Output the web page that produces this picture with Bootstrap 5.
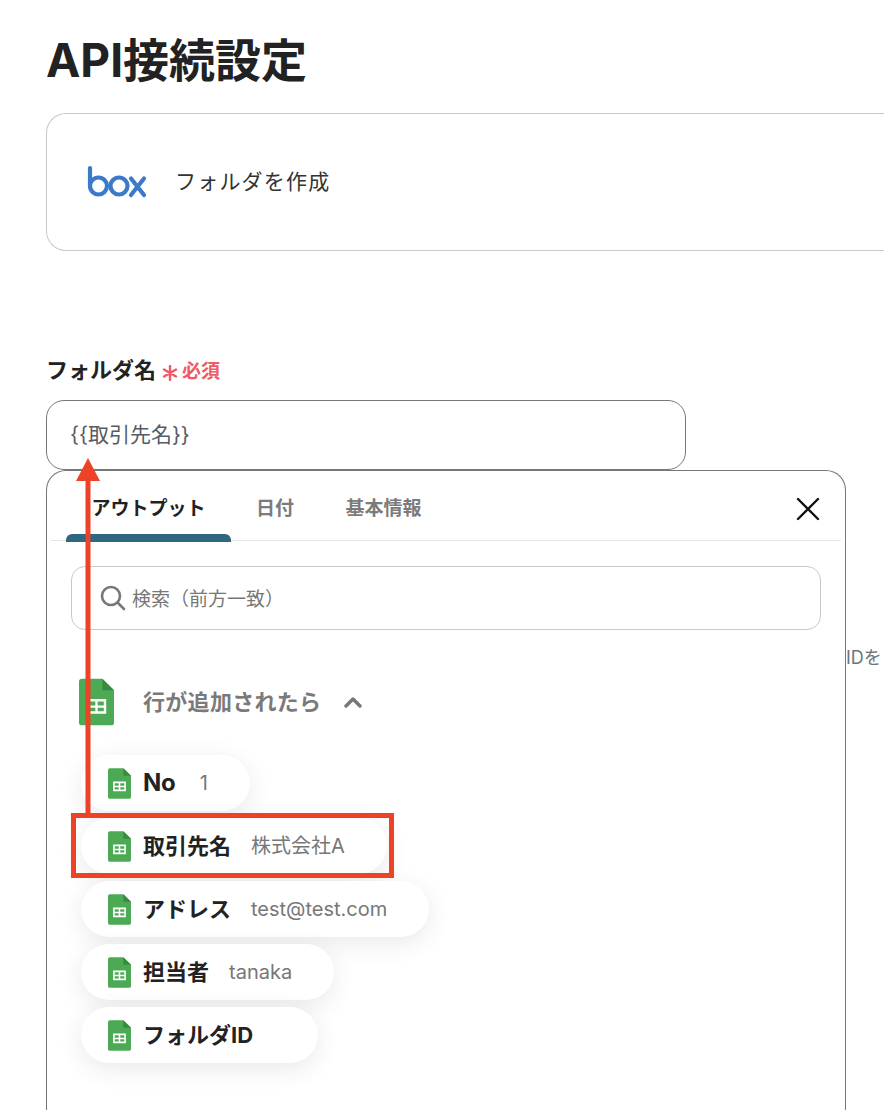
<!DOCTYPE html>
<html lang="ja">
<head>
<meta charset="utf-8">
<title>API接続設定</title>
<link href="https://cdn.jsdelivr.net/npm/bootstrap@5.3.0/dist/css/bootstrap.min.css" rel="stylesheet">
<style>
html,body{margin:0;height:1110px;overflow:hidden;background:#fff}
body{font-family:Inter,"Noto Sans CJK JP",sans-serif;color:#222;position:relative;width:884px}
.pg{padding:32px 0 0 46px;width:884px;overflow:hidden;height:1110px;position:relative}
.ttl{font-size:46px;font-weight:700;line-height:56px;margin:0 0 25px;color:#222}
.appcard{width:838px;height:138px;border:1px solid #c9c9c9;border-right:0;border-radius:20px 0 0 20px;padding-left:40px;gap:28px;font-size:21px;letter-spacing:1.200px;color:#333}
.lbl{margin-top:101px;margin-bottom:12px;height:36px;font-size:22px;font-weight:700;color:#222;gap:6px;line-height:1}
.req{color:#ef5a67;font-size:19px;font-weight:700;margin-top:2px;margin-left:-2px}
.star{width:16px;height:16px;margin-top:5px}
.fld{width:640px;height:70px;border:1px solid #777;border-radius:18px;padding-left:23px;font-size:21px;color:#555c63}
.pop{position:absolute;left:46px;top:470px;width:800px;height:640px;background:#fff;border:1px solid #777;border-bottom:0;border-radius:20px 20px 0 0;padding:0 24px}
.tabs{height:70px;margin:0 -20px;padding-left:15px;border-bottom:1px solid #e4e4e4;position:relative;font-size:19px;font-weight:700;color:#7b7b7b}
.tb{height:70px;line-height:75px;text-align:center}
.tb1{width:165px;color:#222;position:relative}
.tb1::after{content:"";position:absolute;left:0;right:0;bottom:-1px;height:8px;background:#2f6680;border-radius:6px 6px 0 0}
.tb2{width:88px}.tb3{width:105px;margin-left:12px}
.xbtn{position:absolute;right:21px;top:26px;width:24px;height:24px}
.srch{height:64px;margin-top:25px;border:1px solid #c9c9c9;border-radius:14px;padding-left:28px;gap:6px;font-size:19px;color:#777}
.srch span{padding-top:4px}
.grp{margin:47px 0 0 8px;height:50px;font-size:22px;font-weight:700;color:#7a7a7a;gap:29px;letter-spacing:.3px}
.chev{margin-left:-6px}
.chips{margin:28px 0 0 10px;gap:7px;align-items:flex-start}
.chip{height:56px;border-radius:28px;background:#fff;box-shadow:0 6px 26px rgba(0,0,0,.09);padding:0 42px 0 27px;gap:12px}
.chip b{font-size:22px;font-weight:700;color:#222;line-height:1}
.chip b.lat{font-size:24px;letter-spacing:-.2px;margin-right:4px}
.chip span{font-size:20px;color:#777;margin-left:8px;min-width:3px}
.side{position:absolute;left:846px;top:647px;font-size:18px;color:#6c757d;line-height:22px;white-space:nowrap}
.arr{position:absolute;left:76px;top:458px;width:24px;height:358px;overflow:visible}
.box{position:absolute;left:71px;top:813px;width:323px;height:65px;border:5px solid #ec4327}
</style>
</head>
<body>
<svg width="0" height="0" class="position-absolute">
<symbol id="sh" viewBox="0 0 36 48">
<path d="M3 0H24L36 12V45a3 3 0 0 1-3 3H3a3 3 0 0 1-3-3V3a3 3 0 0 1 3-3z" fill="#4caa55"/>
<path d="M24 0L36 12H24z" fill="#378a3f"/>
<path d="M8 21H28V36H8zM10.500 23.500V27.500H16.800V23.500zM19.200 23.500V27.500H25.500V23.500zM10.500 30V33.500H16.800V30zM19.200 30V33.500H25.500V30z" fill="#fff" fill-rule="evenodd"/>
</symbol>
</svg>
<div class="pg">
<h1 class="ttl">API接続設定</h1>
<div class="appcard d-flex align-items-center bg-white">
<svg width="60" height="34" viewBox="0 0 60 34" fill="none" stroke="#3b7ac9" stroke-width="4.200" stroke-linecap="round"><path d="M3 3V21"/><circle cx="11.500" cy="21" r="8.500"/><circle cx="32" cy="21" r="8.500"/><path d="M44 13.500L57 30M57 13.500L44 30"/></svg>
<span>フォルダを作成</span>
</div>
<div class="lbl d-flex align-items-center">
<span>フォルダ名</span>
<svg class="star" viewBox="0 0 16 16" stroke="#ef5a67" stroke-width="2.400" stroke-linecap="round"><path d="M8 1V15M2 4.500L14 11.500M14 4.500L2 11.500"/></svg>
<span class="req">必須</span>
</div>
<div class="fld d-flex align-items-center">{{取引先名}}</div>
<div class="side">IDを</div>
</div>
<div class="pop">
<div class="tabs d-flex">
<div class="tb tb1">アウトプット</div>
<div class="tb tb2">日付</div>
<div class="tb tb3">基本情報</div>
<svg class="xbtn" viewBox="0 0 24 24" stroke="#111" stroke-width="2.400" stroke-linecap="round"><path d="M2 2L22 22M22 2L2 22"/></svg>
</div>
<div class="srch d-flex align-items-center">
<svg width="26" height="26" viewBox="0 0 26 26" fill="none" stroke="#777" stroke-width="2.600" stroke-linecap="round"><circle cx="11" cy="11" r="9"/><path d="M17.500 17.500L24 24"/></svg>
<span>検索（前方一致）</span>
</div>
<div class="grp d-flex align-items-center">
<svg width="35" height="48"><use href="#sh"/></svg>
<span>行が追加されたら</span>
<svg class="chev" width="18" height="12" viewBox="0 0 18 12" fill="none" stroke="#777" stroke-width="3.400" stroke-linecap="round" stroke-linejoin="round"><path d="M2 10L9 3L16 10"/></svg>
</div>
<div class="chips d-flex flex-column">
<div class="chip d-flex align-items-center"><svg width="23" height="31"><use href="#sh"/></svg><b class="lat">No</b><span>1</span></div>
<div class="chip d-flex align-items-center"><svg width="23" height="31"><use href="#sh"/></svg><b>取引先名</b><span>株式会社A</span></div>
<div class="chip d-flex align-items-center"><svg width="23" height="31"><use href="#sh"/></svg><b>アドレス</b><span>test@test.com</span></div>
<div class="chip d-flex align-items-center"><svg width="23" height="31"><use href="#sh"/></svg><b>担当者</b><span>tanaka</span></div>
<div class="chip d-flex align-items-center"><svg width="23" height="31"><use href="#sh"/></svg><b>フォルダID</b><span></span></div>
</div>
</div>
<svg class="arr" viewBox="0 0 24 358"><path d="M12 0L24 23H14.500V357H9.500V23H0z" fill="#ec4327"/></svg>
<div class="box"></div>
<script src="https://cdn.jsdelivr.net/npm/bootstrap@5.3.0/dist/js/bootstrap.bundle.min.js"></script>
</body>
</html>
